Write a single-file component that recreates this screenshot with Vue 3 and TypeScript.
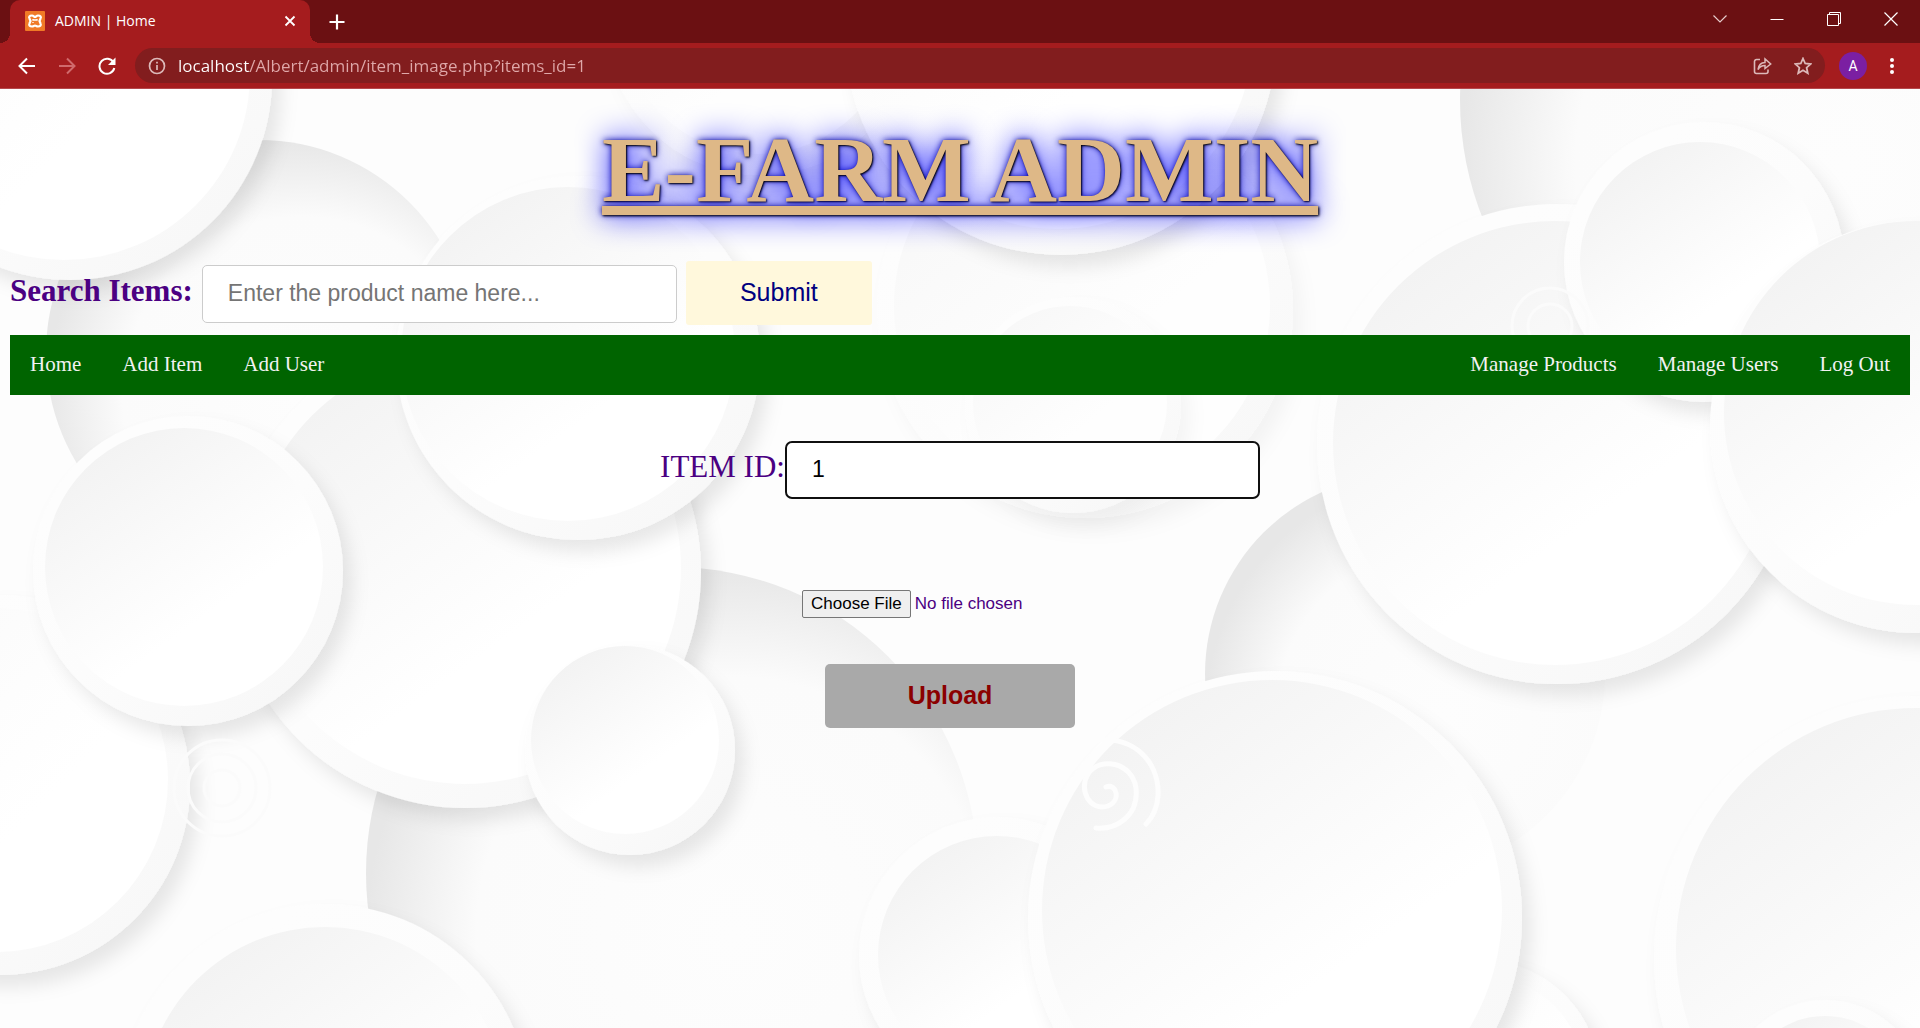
<script setup lang="ts">
import { ref } from 'vue'

interface Disc {
  x: number
  y: number
  r: number
  ix: number
  iy: number
  ir: number
  tone: 'soft' | 'deep' | 'plain' | 'faint'
}

const disc = (
  x: number, y: number, r: number,
  ix: number, iy: number, ir: number,
  tone: Disc['tone'] = 'soft',
): Disc => ({ x, y, r, ix, iy, ir, tone })

// Paper discs of the page backdrop, listed from back to front.
const discs: Disc[] = [
  disc(1780, 100, 320, 1780, 100, 320, 'deep'),
  disc(1085, 310, 208, 1082, 306, 188, 'faint'),
  disc(760, 20, 155, 758, 16, 138, 'faint'),
  disc(1061, 40, 215, 1058, 34, 195, 'plain'),
  disc(259, 353, 213, 259, 353, 213, 'deep'),
  disc(672, 873, 306, 672, 873, 306, 'deep'),
  disc(1405, 674, 200, 1405, 674, 200, 'deep'),
  disc(465, 572, 236, 465, 568, 216),
  disc(578, 358, 182, 568, 354, 167),
  disc(70, 78, 202, 64, 74, 186, 'plain'),
  disc(0, 785, 190, -4, 780, 172, 'plain'),
  disc(188, 571, 155, 184, 567, 139),
  disc(630, 750, 105, 625, 740, 94),
  disc(325, 1109, 205, 325, 1109, 182),
  disc(997, 955, 138, 997, 955, 119),
  disc(1480, 1080, 120, 1480, 1080, 105, 'plain'),
  disc(1275, 918, 247, 1272, 910, 230),
  disc(1557, 444, 240, 1555, 443, 222),
  disc(1704, 262, 140, 1700, 262, 120),
  disc(1916, 427, 206, 1916, 413, 192),
  disc(1073, 405, 108, 1070, 403, 97, 'faint'),
  disc(1916, 958, 262, 1916, 948, 240),
  disc(1825, 1100, 100, 1825, 1100, 84),
]

const lift = (tone: Disc['tone']) =>
  tone === 'deep' ? undefined : tone === 'faint' ? 'url(#lift-faint)' : 'url(#lift)'

const address = ref('localhost/Albert/admin/item_image.php?items_id=1')
const query = ref('')
const itemId = ref('1')
const leftLinks = ['Home', 'Add Item', 'Add User']
const rightLinks = ['Manage Products', 'Manage Users', 'Log Out']
</script>

<template>
  <div class="window">
    <header class="browser">
      <div class="tabstrip">
        <div class="tab">
          <svg class="favicon" width="20" height="20" viewBox="0 0 20 20">
            <rect width="20" height="20" rx="1" fill="#f07a26" />
            <path d="M7 4.500C4.500 4.500 3.500 6 4.500 7.500L5.500 10L4.500 12.500C3.500 14.500 5 15.500 7 15.500C8.500 15.500 9 14.500 10 14.500S11.500 15.500 13 15.500C15 15.500 16.500 14.500 15.500 12.500L14.500 10L15.500 7.500C16.500 6 15.500 4.500 13 4.500C11.500 4.500 11 6 10 6S8.500 4.500 7 4.500Z" fill="none" stroke="#fff" stroke-width="2.200" />
            <path d="M8 8V9H12V8M8 12V11" fill="none" stroke="#fff" stroke-width="1.300" />
          </svg>
          <span class="tab-title">ADMIN | Home</span>
          <button class="icon-btn" aria-label="Close tab">
            <svg width="12" height="12" viewBox="0 0 12 12"><path d="M1.500 1.500L10.500 10.500M10.500 1.500L1.500 10.500" stroke="#fff" stroke-width="1.800" /></svg>
          </button>
        </div>
        <button class="icon-btn new-tab" aria-label="New tab">
          <svg width="16" height="16" viewBox="0 0 16 16"><path d="M8 0.500V15.500M0.500 8H15.500" stroke="#fff" stroke-width="2.200" /></svg>
        </button>
        <div class="controls">
          <button class="icon-btn" aria-label="Search tabs">
            <svg width="14" height="14" viewBox="0 0 14 14"><path d="M0.500 3.500L7 10L13.500 3.500" fill="none" stroke="#e6cccc" stroke-width="1.200" /></svg>
          </button>
          <button class="icon-btn" aria-label="Minimize">
            <svg width="14" height="14" viewBox="0 0 14 14"><path d="M0.500 7.500H13.500" stroke="#fff" /></svg>
          </button>
          <button class="icon-btn" aria-label="Restore">
            <svg width="14" height="14" viewBox="0 0 14 14"><path d="M0.500 2.500H11.500V13.500H0.500ZM2.500 2.500V0.500H13.500V11.500H11.500" fill="none" stroke="#fff" /></svg>
          </button>
          <button class="icon-btn" aria-label="Close">
            <svg width="14" height="14" viewBox="0 0 14 14"><path d="M0.500 0.500L13.500 13.500M13.500 0.500L0.500 13.500" stroke="#fff" stroke-width="1.200" /></svg>
          </button>
        </div>
      </div>

      <div class="toolbar">
        <div class="history">
          <button class="icon-btn" aria-label="Back">
            <svg width="18" height="18" viewBox="0 0 18 18"><path d="M17 9H2M9 1.500L1.500 9L9 16.500" fill="none" stroke="#fff" stroke-width="2" /></svg>
          </button>
          <button class="icon-btn" aria-label="Forward">
            <svg width="18" height="18" viewBox="0 0 18 18"><path d="M1 9H16M9 1.500L16.500 9L9 16.500" fill="none" stroke="#d06a6c" stroke-width="2" /></svg>
          </button>
          <button class="icon-btn" aria-label="Reload">
            <svg width="18" height="18" viewBox="0 0 18 18">
              <path d="M15.500 5.500A7.500 7.500 0 1 0 16.300 11" fill="none" stroke="#fff" stroke-width="2" />
              <path d="M17.500 0.500V8H10Z" fill="#fff" />
            </svg>
          </button>
        </div>
        <div class="omnibox">
          <svg width="18" height="18" viewBox="0 0 18 18">
            <circle cx="9" cy="9" r="7.500" fill="none" stroke="#dcb9b9" stroke-width="1.700" />
            <path d="M9 8V13M9 4.700V6.500" stroke="#dcb9b9" stroke-width="1.700" />
          </svg>
          <input v-model="address" class="url" type="text" aria-label="Address" spellcheck="false" />
          <div class="page-actions">
            <button class="icon-btn" aria-label="Share">
              <svg width="19" height="18" viewBox="0 0 19 18" fill="none" stroke="#dcb9b9" stroke-width="1.600">
                <path d="M7 2.500H3.500A2 2 0 0 0 1.500 4.500V14.500A2 2 0 0 0 3.500 16.500H13A2 2 0 0 0 15 14.500V12.500" />
                <path d="M5 12.500C5.500 8.500 8 5.700 12 5.500V2L17.700 7L12 11.500V8.500C9 8.500 6.500 10 5 12.500Z" stroke-width="1.500" />
              </svg>
            </button>
            <button class="icon-btn" aria-label="Bookmark">
              <svg width="18" height="18" viewBox="0 0 18 18"><path d="M9 1.500L11.200 6.500L16.700 7L12.600 10.700L13.800 16.200L9 13.300L4.200 16.200L5.400 10.700L1.300 7L6.800 6.500Z" fill="none" stroke="#dcb9b9" stroke-width="1.800" /></svg>
            </button>
          </div>
        </div>
        <button class="icon-btn avatar" aria-label="Profile">A</button>
        <button class="icon-btn menu" aria-label="Menu">
          <svg width="4" height="16" viewBox="0 0 4 16" fill="#fff"><circle cx="2" cy="2" r="2" /><circle cx="2" cy="8" r="2" /><circle cx="2" cy="14" r="2" /></svg>
        </button>
      </div>
    </header>

    <div class="page">
      <svg class="backdrop" viewBox="0 89 1920 939" preserveAspectRatio="xMidYMid slice" aria-hidden="true">
        <defs>
          <linearGradient id="rim" x1="0.2" y1="0.2" x2="0.8" y2="0.9">
            <stop offset="0" stop-color="#fdfdfd" />
            <stop offset="0.5" stop-color="#fcfcfc" />
            <stop offset="1" stop-color="#f8f8f8" />
          </linearGradient>
          <linearGradient id="soft" x1="0.2" y1="0.1" x2="0.7" y2="0.8">
            <stop offset="0" stop-color="#f3f3f3" />
            <stop offset="0.45" stop-color="#fafafa" />
            <stop offset="0.8" stop-color="#ffffff" />
          </linearGradient>
          <radialGradient id="deep" cx="0.6" cy="0.6" r="0.6">
            <stop offset="0" stop-color="#fdfdfd" />
            <stop offset="0.7" stop-color="#fbfbfb" />
            <stop offset="1" stop-color="#e7e7e7" />
          </radialGradient>
          <linearGradient id="plain" x1="0.1" y1="0.1" x2="0.6" y2="0.6">
            <stop offset="0" stop-color="#fafafa" />
            <stop offset="1" stop-color="#ffffff" />
          </linearGradient>
          <linearGradient id="faint" x1="0.2" y1="0.1" x2="0.6" y2="0.6">
            <stop offset="0" stop-color="#f8f8f8" />
            <stop offset="1" stop-color="#fefefe" />
          </linearGradient>
          <filter id="lift" x="-20%" y="-20%" width="150%" height="150%">
            <feDropShadow dx="9" dy="12" stdDeviation="9" flood-color="#000" flood-opacity="0.09" />
          </filter>
          <filter id="lift-faint" x="-20%" y="-20%" width="150%" height="150%">
            <feDropShadow dx="9" dy="12" stdDeviation="9" flood-color="#000" flood-opacity="0.04" />
          </filter>
        </defs>
        <rect y="89" width="1920" height="939" fill="#fdfdfd" />
        <g v-for="(d, i) in discs" :key="i">
          <circle v-if="d.tone !== 'deep'" :cx="d.x" :cy="d.y" :r="d.r" fill="url(#rim)" :filter="lift(d.tone)" />
          <circle :cx="d.ix" :cy="d.iy" :r="d.ir" :fill="`url(#${d.tone})`" />
        </g>
        <g fill="none" stroke-linecap="round">
          <g stroke="#fdfdfd" stroke-width="5">
            <path d="M1106 787C1116 783 1122 800 1108 806C1090 812 1078 790 1088 774C1100 756 1132 762 1136 788C1139 816 1116 830 1096 828" />
            <path d="M1090 742C1128 732 1160 758 1158 796C1157 810 1152 818 1146 824" />
          </g>
          <g stroke="#fbfbfb" stroke-width="3">
            <circle cx="222" cy="788" r="18" />
            <circle cx="222" cy="788" r="34" />
            <circle cx="222" cy="788" r="48" />
            <circle cx="1550" cy="326" r="22" />
            <circle cx="1550" cy="326" r="38" />
          </g>
        </g>
      </svg>

      <main class="content">
        <h1>E-FARM ADMIN</h1>

        <form class="search" @submit.prevent>
          <label for="search">Search Items:</label>
          <input id="search" v-model="query" class="field" type="text" placeholder="Enter the product name here..." />
          <button class="action submit" type="submit">Submit</button>
        </form>

        <nav>
          <div class="links">
            <a v-for="l in leftLinks" :key="l" href="#">{{ l }}</a>
          </div>
          <div class="links">
            <a v-for="l in rightLinks" :key="l" href="#">{{ l }}</a>
          </div>
        </nav>

        <form class="upload-form" @submit.prevent>
          <div class="item">
            <label for="item-id">ITEM ID:</label>
            <input id="item-id" v-model="itemId" class="field active" type="text" />
          </div>
          <input class="file" type="file" aria-label="Item image" />
          <button class="action upload" type="submit">Upload</button>
        </form>
      </main>
    </div>
  </div>
</template>

<style>
body {
  margin: 0;
}
</style>

<style scoped>
* {
  box-sizing: border-box;
}

.window {
  display: flex;
  flex-direction: column;
  min-height: 100vh;
  overflow: hidden;
}

/* Browser frame */
.browser {
  font-family: "Open Sans", "Noto Sans", sans-serif;
  color: #fff;
  background: #a51c1e;
  border-bottom: 1px solid #b5484c;
}

.icon-btn {
  display: flex;
  align-items: center;
  justify-content: center;
  padding: 0;
  border: 0;
  background: none;
  color: #fff;
}

.tabstrip {
  display: flex;
  align-items: center;
  height: 43px;
  padding-left: 10px;
  background: #6b1012;
}

.tab {
  position: relative;
  display: flex;
  align-items: center;
  width: 300px;
  height: 43px;
  padding: 0 14px 2px 15px;
  border-radius: 10px 10px 0 0;
  background: #a51c1e;
}

.tab::before,
.tab::after {
  content: "";
  position: absolute;
  bottom: 0;
  width: 10px;
  height: 10px;
}

.tab::before {
  right: 100%;
  background: radial-gradient(circle at 0 0, transparent 10px, #a51c1e 10px);
}

.tab::after {
  left: 100%;
  background: radial-gradient(circle at 100% 0, transparent 10px, #a51c1e 10px);
}

.tab-title {
  flex: 1;
  margin-left: 10px;
  font-size: 14px;
  line-height: 20px;
}

.new-tab {
  margin-left: 19px;
}

.controls {
  display: flex;
  gap: 43px;
  margin: 0 22px 6px auto;
}

.toolbar {
  display: flex;
  align-items: center;
  height: 45px;
  padding: 0 26px 0 18px;
}

.history {
  display: flex;
  gap: 22px;
}

.omnibox {
  display: flex;
  flex: 1;
  align-items: center;
  gap: 12px;
  height: 35px;
  margin: 0 14px 0 19px;
  padding: 0 13px;
  border-radius: 18px;
  background: #821d1e;
}

.url {
  flex: 1;
  min-width: 0;
  height: 30px;
  padding: 0;
  border: 0;
  outline: 0;
  font-family: inherit;
  font-size: 17px;
  color: transparent;
  background: linear-gradient(90deg, #ffffff 72px, #dfa8a9 72px);
  background-clip: text;
}

.page-actions {
  display: flex;
  gap: 22px;
}

.avatar {
  width: 28px;
  height: 28px;
  border-radius: 50%;
  background: #7b1fa2;
  font-family: Roboto, sans-serif;
  font-size: 14px;
}

.menu {
  margin-left: 23px;
}

/* Page */
.page {
  position: relative;
  flex: 1;
  font-family: "Liberation Serif", "Times New Roman", serif;
  color: #4b0082;
}

.backdrop {
  position: absolute;
  inset: 0;
  width: 100%;
  height: 100%;
}

.content {
  position: relative;
  padding: 26px 10px;
}

h1 {
  margin: 0 0 38px;
  font-size: 94px;
  line-height: 108px;
  text-align: center;
  text-decoration: underline;
  color: burlywood;
  text-shadow: 1px 1px 2px black, 0 0 31px blue, 0 0 6px darkblue;
}

label {
  font-size: 31px;
  line-height: 36px;
}

.search {
  display: flex;
  align-items: baseline;
  gap: 9px;
  margin-bottom: 10px;
}

.search label {
  font-weight: bold;
}

.field {
  width: 475px;
  height: 58px;
  padding: 0 25px 2px;
  border: 1px solid #ccc;
  border-radius: 5px;
  outline: 0;
  background: #fff;
  font-family: "Liberation Sans", Arial, sans-serif;
  font-size: 23px;
  color: #000;
}

.field::placeholder {
  color: #757575;
}

.field.active {
  border: 2px solid #101010;
  border-radius: 7px;
}

.action {
  height: 64px;
  padding: 0 0 2px;
  border: 0;
  border-radius: 5px;
  font-family: "Liberation Sans", Arial, sans-serif;
  font-size: 25px;
}

.submit {
  width: 186px;
  border-radius: 3px;
  background: cornsilk;
  color: navy;
}

nav {
  display: flex;
  justify-content: space-between;
  height: 60px;
  margin-bottom: 46px;
  padding: 0 20px 2px;
  background: #006400;
}

.links {
  display: flex;
  align-items: center;
  gap: 41px;
}

.links a {
  font-size: 21px;
  line-height: 24px;
  color: #f2f2f2;
  text-decoration: none;
}

.upload-form {
  display: flex;
  flex-direction: column;
  align-items: center;
}

.item {
  display: flex;
  align-items: baseline;
  margin-bottom: 91px;
}

.file {
  width: 316px;
  height: 28px;
  margin-bottom: 46px;
  font-family: "Liberation Sans", Arial, sans-serif;
  font-size: 17px;
  color: inherit;
}

.file::file-selector-button {
  height: 28px;
  margin: 0 4px 0 0;
  padding: 0 8px;
  border: 1px solid #767676;
  border-radius: 2px;
  background: #efefef;
  font-family: inherit;
  font-size: 17px;
  color: #000;
}

.upload {
  width: 250px;
  margin-right: 20px;
  background: darkgray;
  color: darkred;
  font-weight: bold;
}
</style>
